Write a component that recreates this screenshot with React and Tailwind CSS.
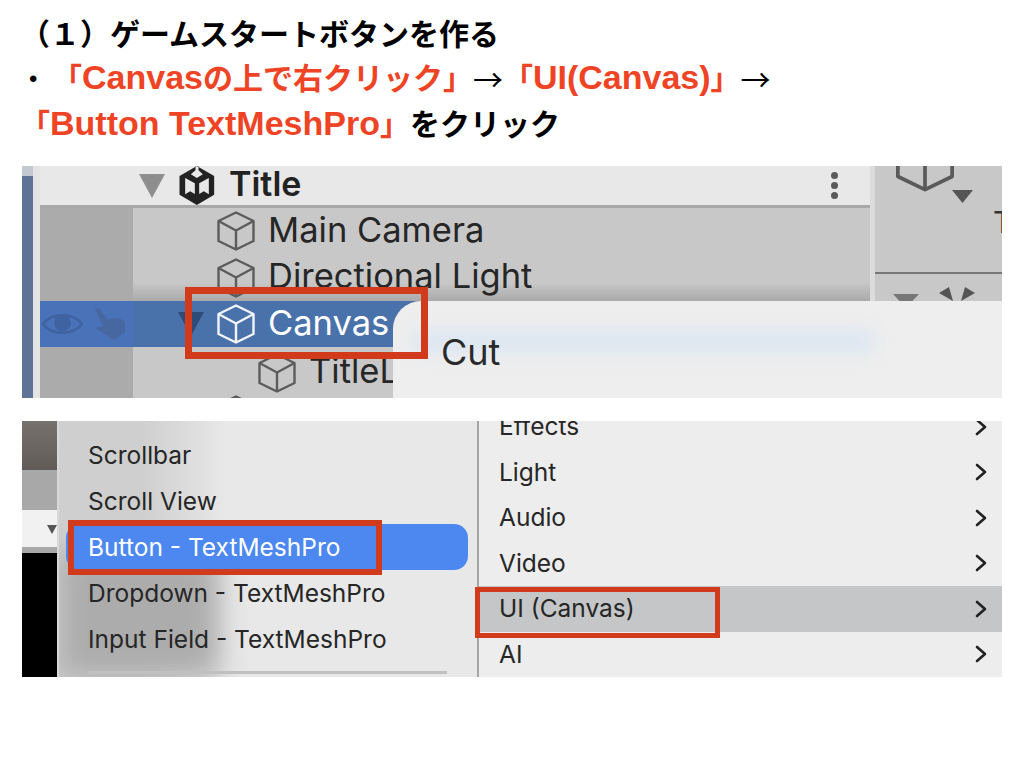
import React from "react";

const sans = { fontFamily: '"Liberation Sans","Noto Sans CJK JP",sans-serif' };
const hier = { fontFamily: '"Inter","Liberation Sans",sans-serif' };

function Cube({ color = "#5c5c5c", className = "" }) {
  return (
    <svg viewBox="0 0 38 40" className={className} fill="none" stroke={color} strokeWidth="2.4" strokeLinejoin="round">
      <path d="M19 1.5 L36.5 10 V30 L19 38.5 L1.5 30 V10 Z" />
      <path d="M1.5 10 L19 19.5 L36.5 10 M19 19.5 V38.5" />
    </svg>
  );
}

function UnityLogo() {
  return (
    <svg viewBox="0 0 105 117" className="w-[36px] h-[39px] shrink-0" fill="#222" fillRule="evenodd">
      <path d="M52 0 L104 30 V86 L52 117 L0 86 V30 Z M48 0 H57 V13 L70 25 L52 36 L34 25 L48 13 Z M17 36 L46 52 V84 L32 76 L17 85 Z M88 36 L59 52 V84 L73 76 L88 85 Z" />
    </svg>
  );
}

function Chevron() {
  return (
    <svg viewBox="0 0 14 18" className="w-[14px] h-[18px]" fill="none" stroke="#222" strokeWidth="2.6" strokeLinecap="round" strokeLinejoin="round">
      <path d="M3 2 L11 9 L3 16" />
    </svg>
  );
}

function Tri({ className, color }) {
  return (
    <svg viewBox="0 0 26 24" className={className} fill={color} preserveAspectRatio="none">
      <path d="M0 0 H26 L13 24 Z" />
    </svg>
  );
}

function Row({ h, indent, children, rest = "bg-[#c8c8c8]" }) {
  return (
    <div className={`flex ${h}`}>
      <div className="w-[93px] shrink-0 bg-[#ababab]" />
      <div className={`flex-1 flex items-center gap-[13px] ${rest} ${indent}`}>{children}</div>
    </div>
  );
}

function LeftItem({ children, active }) {
  return (
    <div
      className={
        active
          ? "h-[46px] flex items-center ml-[7px] mr-[9px] pl-[22px] text-[24.5px] text-white bg-[#4c88ef] rounded-[14px]"
          : "h-[46px] flex items-center pl-[29px] text-[24.5px] text-[#262626]"
      }
    >
      {children}
    </div>
  );
}

function RightItem({ children, active }) {
  return (
    <div className={`h-[46.3px] flex items-center justify-between pl-[20px] pr-[14px] text-[24.5px] text-[#262626] ${active ? "bg-[#c5c6c8]" : ""}`}>
      <span>{children}</span>
      <Chevron />
    </div>
  );
}

function L({ children }) {
  return <span className="text-[34px] leading-[45px]">{children}</span>;
}

function Arrow() {
  return <span className="font-normal w-[30px] text-[30px] font-['Noto_Sans_CJK_JP']">→</span>;
}

export default function App() {
  return (
    <div className="w-[1024px] h-[768px] bg-white overflow-hidden" style={sans}>
      <div className="pt-[12px] pl-[20px] font-bold text-[30px] leading-[45px] text-black h-[166px]">
        <div>（１）ゲームスタートボタンを作る</div>
        <div className="flex items-center -mt-[2px]">
          <span className="w-[32px] pl-[9px] font-normal text-[24px]">•</span>
          <span className="text-[#ee4425]">「<L>Canvas</L>の上で右クリック」</span>
          <Arrow />
          <span className="text-[#ee4425]">「<L>UI(Canvas)</L>」</span>
          <Arrow />
        </div>
        <div>
          <span className="text-[#ee4425]">「<L>Button TextMeshPro</L>」</span>をクリック
        </div>
      </div>

      <div className="relative mx-[22px] h-[232px] flex overflow-hidden" style={hier}>
        <div className="w-[11px] shrink-0 flex flex-col">
          <div className="h-[10px] bg-[#c4c8d0]" />
          <div className="flex-1 bg-[#5f7397]" />
        </div>
        <div className="w-[7px] shrink-0 bg-[#e4e4e4]" />
        <div className="w-[830px] shrink-0 flex flex-col text-[#262626] text-[34.5px] leading-[40px]">
          <div className="h-[39px] bg-[#e8e8e8] flex items-center pl-[99px] gap-[14px]">
            <Tri className="w-[26px] h-[24px]" color="#8e8e8e" />
            <UnityLogo />
            <span className="font-semibold text-[34px] text-[#222] -mt-[3px]">Title</span>
            <div className="ml-auto mr-[32px] flex flex-col gap-[3px]">
              <i className="w-[7px] h-[7px] rounded-full bg-[#5a5a5a]" />
              <i className="w-[7px] h-[7px] rounded-full bg-[#5a5a5a]" />
              <i className="w-[7px] h-[7px] rounded-full bg-[#5a5a5a]" />
            </div>
          </div>
          <div className="h-[3px] bg-[#a9a9a9]" />
          <Row h="h-[46px]" indent="pl-[84px]">
            <Cube className="w-[38px] h-[40px] shrink-0" />
            <span className="-translate-y-px">Main Camera</span>
          </Row>
          <Row h="h-[47px]" indent="pl-[84px]" rest="bg-gradient-to-b from-[#c8c8c8] from-60% to-[#aaaaaa]">
            <Cube className="w-[38px] h-[40px] shrink-0" />
            <span className="-translate-y-[2px]">Directional Light</span>
          </Row>
          <div className="h-[46px] flex">
            <div className="w-[93px] shrink-0 bg-[#4a72b8] flex items-center pl-[2px] gap-[11px]">
              <svg viewBox="0 0 42 26" className="w-[41px] h-[26px]" fill="none" stroke="#3f62a0" strokeWidth="2.5">
                <path d="M1 13 C10 1 32 1 41 13 C32 25 10 25 1 13 Z" />
                <circle cx="21" cy="12" r="8.5" fill="#3f62a0" stroke="none" />
              </svg>
              <svg viewBox="0 0 32 32" className="w-[32px] h-[32px]" fill="#46679f">
                <path d="M1 1 L5 0 L14 12 C20 9 28 10 31 14 L31 24 L20 32 L12 27 L1 20 L9 18 Z" />
              </svg>
            </div>
            <div className="flex-1 bg-[#4a72aa] flex items-center pl-[45px] text-white">
              <Tri className="w-[26px] h-[24px] mr-[13px]" color="#2f4b78" />
              <Cube color="#f2f4f8" className="w-[38px] h-[40px] shrink-0 mr-[13px]" />
              <span className="-translate-y-px">Canvas</span>
            </div>
          </div>
          <Row h="flex-1" indent="pl-[125px]">
            <Cube className="w-[38px] h-[40px] shrink-0" />
            <span className="-translate-y-[2px]">TitleL</span>
          </Row>
        </div>
        <div className="w-[5px] shrink-0 bg-[#dcdcdc]" />
        <div className="flex-1 bg-[#c8c8c8] flex flex-col">
          <div className="h-[108px] relative border-b-2 border-[#777777] overflow-hidden">
            <Cube className="absolute left-[20px] top-[-36px] w-[60px] h-[62px]" color="#5a5a5a" />
            <Tri className="absolute left-[77px] top-[24px] w-[21px] h-[13px]" color="#555" />
            <span className="absolute left-[118px] top-[41px] text-[#333] text-[30px] leading-none">T</span>
          </div>
          <div className="flex-1 relative overflow-hidden">
            <Tri className="absolute left-[18px] top-[20px] w-[26px] h-[14px]" color="#777" />
            <svg viewBox="0 0 36 14" className="absolute left-[64px] top-[13px] w-[36px] h-[14px]" fill="#555">
              <path d="M0 6 L10 0 L14 14 Z M36 6 L26 0 L22 14 Z" />
            </svg>
          </div>
        </div>

        <Cube className="absolute left-[195px] top-[229px] w-[38px] h-[40px]" />
        <div className="absolute left-[371px] top-[135px] right-0 bottom-0 bg-[#eeeeee] rounded-tl-[28px] overflow-hidden text-[36px] text-[#2a2a2a] pl-[48px] pt-[31px] leading-[40px]">
          <div className="absolute left-[20px] top-[30px] w-[460px] h-[22px] bg-[#dce6f2] blur-[8px]" />
          <span className="relative">Cut</span>
        </div>
        <div className="absolute left-[163px] top-[121px] w-[243px] h-[72px] border-[7px] border-[#d23a1c]" />
      </div>

      <div className="h-[23px]" />

      <div className="relative mx-[22px] h-[256px] flex overflow-hidden" style={hier}>
        <div className="w-[35px] shrink-0 flex flex-col">
          <div className="h-[49px] bg-gradient-to-b from-[#77726e] to-[#605b58]" />
          <div className="h-[40px] bg-[#a8a8a8]" />
          <div className="h-[37px] bg-[#f1f1f1] relative">
            <Tri className="absolute right-0 top-[15px] w-[10px] h-[9px]" color="#555" />
          </div>
          <div className="h-[6px] bg-[#a8a8a8]" />
          <div className="flex-1 bg-black" />
        </div>
        <div className="w-[2px] shrink-0 bg-[#d8d8d8]" />
        <div className="relative w-[418px] shrink-0 bg-gradient-to-r from-[#cfcfcf] from-20% to-[#e8e8e8] to-40% overflow-hidden">
          <div className="absolute left-0 bottom-0 w-[160px] h-[125px] bg-[#acacac] blur-[14px]" />
          <div className="relative flex flex-col pt-[11px]">
            <LeftItem>Scrollbar</LeftItem>
            <LeftItem>Scroll View</LeftItem>
            <LeftItem active>Button - TextMeshPro</LeftItem>
            <LeftItem>Dropdown - TextMeshPro</LeftItem>
            <LeftItem>Input Field - TextMeshPro</LeftItem>
            <div className="mt-[9px] ml-[29px] mr-[30px] h-[3px] bg-[#c0c0c0]" />
          </div>
        </div>
        <div className="w-[2px] shrink-0 bg-[#a5a5a5]" />
        <div className="flex-1 bg-[#ededed] flex flex-col -mt-[17px]">
          <RightItem>Effects</RightItem>
          <RightItem>Light</RightItem>
          <RightItem>Audio</RightItem>
          <RightItem>Video</RightItem>
          <RightItem active>UI (Canvas)</RightItem>
          <RightItem>AI</RightItem>
        </div>
        <div className="absolute left-[46px] top-[99px] w-[314px] h-[55px] border-[6px] border-[#d23a1c]" />
        <div className="absolute left-[453px] top-[166px] w-[245px] h-[51px] border-[5px] border-[#d23a1c]" />
      </div>
    </div>
  );
}
